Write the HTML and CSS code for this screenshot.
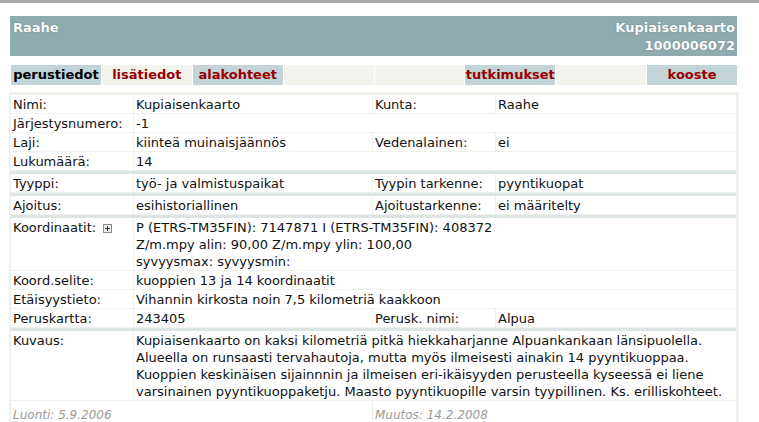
FILE: index.html
```html
<!DOCTYPE html>
<html lang="fi">
<head>
<meta charset="utf-8">
<title>Kupiaisenkaarto</title>
<link rel="stylesheet" href="styles.css">
</head>
<body>
<div class="topbar"></div>
<div class="page">
  <div class="header">
    <div class="h-left">Raahe</div>
    <div class="h-right">Kupiaisenkaarto<br>1000006072</div>
  </div>
  <div class="tabs">
    <div class="tab active">perustiedot</div>
    <div class="tab plain">lisätiedot</div>
    <div class="tab blue">alakohteet</div>
    <div class="tab plain"></div>
    <div class="tab plain"></div>
    <div class="tab blue">tutkimukset</div>
    <div class="tab plain"></div>
    <div class="tab blue">kooste</div>
  </div>
  <div class="data">
    <div class="row">
      <div class="c lab">Nimi:</div><div class="c">Kupiaisenkaarto</div>
      <div class="c lab">Kunta:</div><div class="c">Raahe</div>
    </div>
    <div class="row">
      <div class="c lab">Järjestysnumero:</div><div class="c span3">-1</div>
    </div>
    <div class="row">
      <div class="c lab">Laji:</div><div class="c">kiinteä muinaisjäännös</div>
      <div class="c lab">Vedenalainen:</div><div class="c">ei</div>
    </div>
    <div class="row">
      <div class="c lab">Lukumäärä:</div><div class="c span3">14</div>
    </div>
    <div class="row group">
      <div class="c lab">Tyyppi:</div><div class="c">työ- ja valmistuspaikat</div>
      <div class="c lab">Tyypin tarkenne:</div><div class="c">pyyntikuopat</div>
    </div>
    <div class="row group">
      <div class="c lab">Ajoitus:</div><div class="c">esihistoriallinen</div>
      <div class="c lab">Ajoitustarkenne:</div><div class="c">ei määritelty</div>
    </div>
    <div class="row group">
      <div class="c lab">Koordinaatit: <span class="plus"></span></div>
      <div class="c span3">P (ETRS-TM35FIN): 7147871 I (ETRS-TM35FIN): 408372<br>Z/m.mpy alin: 90,00 Z/m.mpy ylin: 100,00<br>syvyysmax: syvyysmin:</div>
    </div>
    <div class="row">
      <div class="c lab">Koord.selite:</div><div class="c span3">kuoppien 13 ja 14 koordinaatit</div>
    </div>
    <div class="row">
      <div class="c lab">Etäisyystieto:</div><div class="c span3">Vihannin kirkosta noin 7,5 kilometriä kaakkoon</div>
    </div>
    <div class="row">
      <div class="c lab">Peruskartta:</div><div class="c">243405</div>
      <div class="c lab">Perusk. nimi:</div><div class="c">Alpua</div>
    </div>
    <div class="row group">
      <div class="c lab">Kuvaus:</div>
      <div class="c span3">Kupiaisenkaarto on kaksi kilometriä pitkä hiekkaharjanne Alpuankankaan länsipuolella.<br>Alueella on runsaasti tervahautoja, mutta myös ilmeisesti ainakin 14 pyyntikuoppaa.<br>Kuoppien keskinäisen sijainnnin ja ilmeisen eri-ikäisyyden perusteella kyseessä ei liene<br>varsinainen pyyntikuoppaketju. Maasto pyyntikuopille varsin tyypillinen. Ks. erilliskohteet.</div>
    </div>
    <div class="row foot">
      <div class="c span2">Luonti: 5.9.2006</div>
      <div class="c span2">Muutos: 14.2.2008</div>
    </div>
  </div>
</div>
</body>
</html>
```

FILE: styles.css
```css
html, body {
  margin: 0;
  padding: 0;
  background: #ffffff;
}
body {
  font-family: "DejaVu Sans", Verdana, sans-serif;
  font-size: 13px;
  color: #111111;
}
.topbar {
  height: 3px;
  background: #a8a8a8;
}
.page {
  padding: 13px 0 0 10px;
  width: 727px;
}
.header {
  background: #8eabb0;
  height: 40px;
  display: flex;
  justify-content: space-between;
  align-items: flex-start;
  color: #ffffff;
  font-weight: bold;
  font-size: 13px;
  line-height: 18px;
  padding: 3px 2px 0 3px;
  box-sizing: border-box;
  text-shadow: 0 0 1px rgba(40, 60, 64, 0.6);
}
.h-right {
  text-align: right;
}
.tabs {
  display: grid;
  grid-template-columns: repeat(8, 1fr);
  column-gap: 1px;
  margin: 9px 0 0 1px;
  height: 20px;
}
.tab {
  font-weight: bold;
  font-size: 13px;
  line-height: 20px;
  text-align: center;
  color: #990000;
}
.tab.active {
  background: #c3d4d8;
  color: #000000;
}
.tab.blue {
  background: #c3d4d8;
}
.tab.plain {
  background: #f3f3ee;
}
.data {
  margin: 7px 0 0 -1px;
  width: 730px;
  background: #f1f1eb;
  padding: 3px 3px 0 2px;
  box-sizing: border-box;
  display: flex;
  flex-direction: column;
  gap: 1px;
  height: 340px;
}
.row {
  display: grid;
  grid-template-columns: 122px 238px 122px 1fr;
  column-gap: 1px;
}
.row.group {
  border-top: 3px solid #dce4e4;
}
.c {
  background: #ffffff;
  line-height: 17px;
  padding: 1px 2px 0 2px;
  white-space: nowrap;
}
.c.span3 {
  grid-column: span 3;
}
.c.span2 {
  grid-column: span 2;
}
.row.foot {
  flex: 1;
}
.row.foot .c {
  color: #9a9a9a;
  font-style: italic;
  font-size: 12px;
  padding-top: 6px;
}
.plus {
  display: inline-block;
  width: 7px;
  height: 7px;
  border: 1px solid #8c8c8c;
  background:
    linear-gradient(#333, #333) center / 5px 1px no-repeat,
    linear-gradient(#333, #333) center / 1px 5px no-repeat,
    #eeeeee;
  vertical-align: -1px;
  margin-left: 3px;
}
```
